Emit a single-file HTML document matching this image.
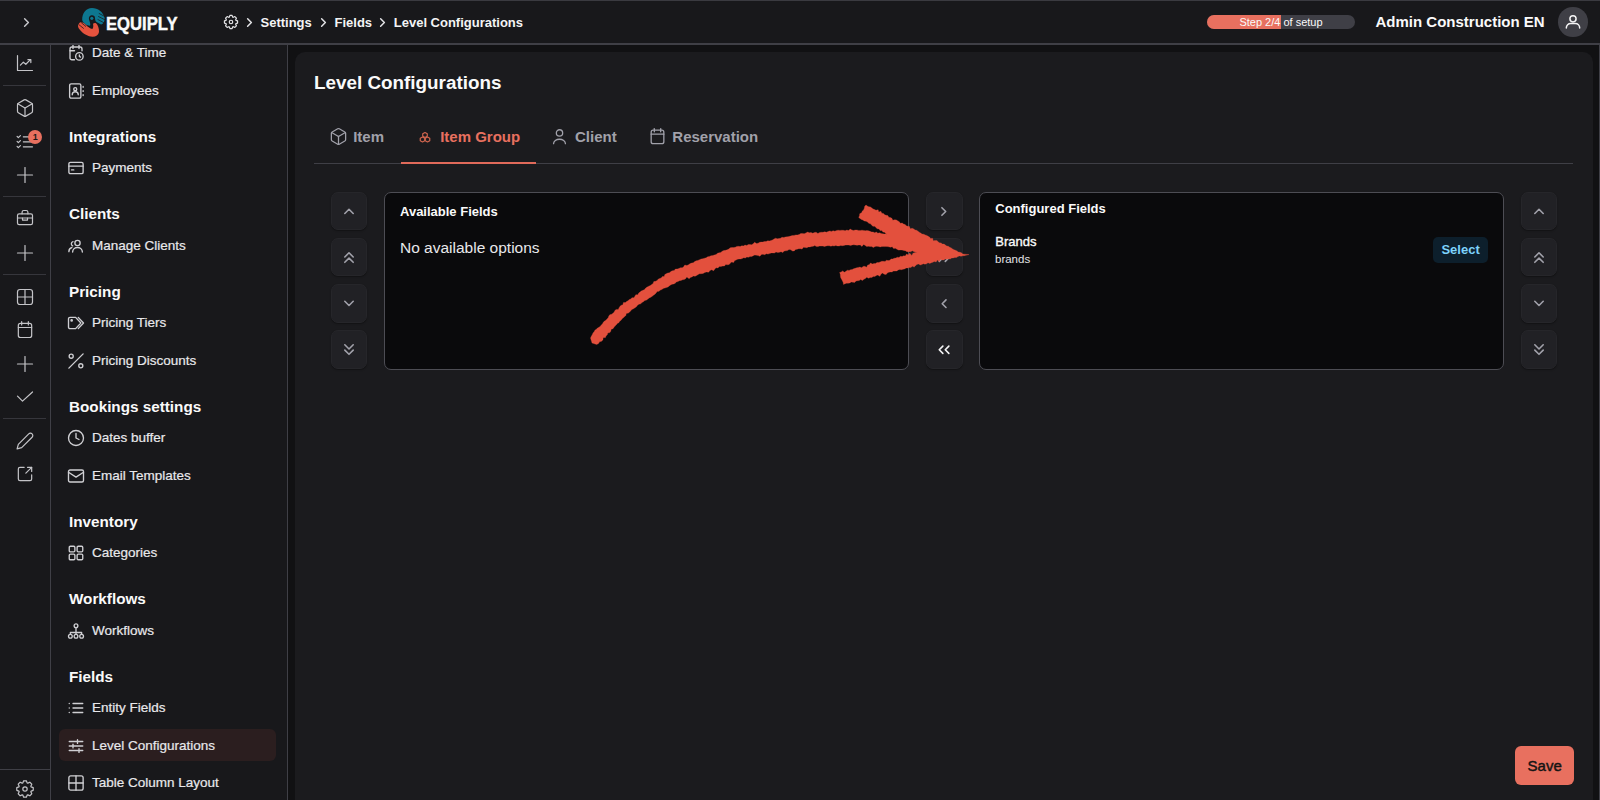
<!DOCTYPE html>
<html><head><meta charset="utf-8">
<style>
*{box-sizing:border-box;margin:0;padding:0}
html,body{width:1600px;height:800px;overflow:hidden;background:#111113;font-family:"Liberation Sans",sans-serif;color:#f4f4f5}
.abs{position:absolute}
svg{display:block}
.ic{fill:none;stroke:currentColor;stroke-linecap:round;stroke-linejoin:round}
#header{position:absolute;z-index:5;left:0;top:0;width:1600px;height:45px;background:#18181b;border-top:1px solid #3a3a40;border-bottom:2px solid #3f3f46}
#rail{position:absolute;left:0;top:45px;width:51px;height:755px;background:#18181b;border-right:1.2px solid #3f3f46}
#side{position:absolute;left:51px;top:45px;width:237px;height:755px;background:#18181b;border-right:1.2px solid #3f3f46}
#winr{position:absolute;left:1598.5px;top:0;width:1.5px;height:800px;background:#3f3f46}
#panel{position:absolute;left:294.8px;top:52.2px;width:1298px;height:760px;background:#1b1b1e;border-radius:10px}
.t{position:absolute;white-space:nowrap}
.rule{position:absolute;left:3px;width:43px;height:1.2px;background:#3a3a40}
.ri{position:absolute;left:17px;width:15px;height:15px;color:#c9c9cd}
.sh{position:absolute;left:18px;font-size:16px;font-weight:bold;color:#fafafa;line-height:20px;white-space:nowrap}
.si{position:absolute;left:18px;font-size:14px;color:#e4e4e7;line-height:20px;white-space:nowrap}
.si svg{position:absolute;left:0;top:2px;width:16px;height:16px;color:#c9c9cd}
.si span{position:absolute;left:23px;top:0}
.btn{position:absolute;width:36.5px;height:38.5px;background:#212125;border-radius:7px;color:#a9a9ae;border:1px solid #26262a;box-shadow:0 1px 1.5px rgba(0,0,0,0.35)}
.btn svg{position:absolute;left:-1px;top:-1px}
.box{position:absolute;top:191.5px;height:178.5px;background:#0a0a0c;border:1.5px solid #4d4d54;border-radius:7px}
</style></head><body>
<div id="panel"></div>
<div id="header">
<svg class="abs ic" style="left:19px;top:13.5px;color:#c9c9cd" width="15" height="15" viewBox="0 0 24 24" stroke-width="2.3"><path d="m9 18 6-6-6-6"/></svg>
<svg class="abs" style="left:74px;top:3px" width="36" height="36" viewBox="0 0 36 36">
<path fill="#0d7790" d="M8.2,16 C8,9 12,4 18,4 C24,4 29,8 30.5,13.5 C31,17 29.5,20 27,20.5 L22.5,18 C21.3,17 21,15.5 21,14 C21,12 19.5,11 17.5,11.3 C15.5,11.7 14.5,13.5 15,15.5 C15.6,18 17,20 16,21.8 C12.5,21.5 9,19.5 8.2,16 Z"/>
<circle cx="17.8" cy="14.3" r="1.6" fill="#0d7790"/><path d="M24.8,9.3 L31,12.6 M24.2,12.4 L31,15.8 M23.6,15.4 L30,18.8" stroke="#18181b" stroke-width="0.75" fill="none"/>
<path fill="#e5533e" d="M4,21.8 C4.5,19.5 5.8,18 7,18.2 C8.5,18.3 10,19 12,21 C14,23 16,24.5 18.3,25 C19.6,24 19.4,21.5 19,19.8 C20,19 21,18.8 22,19.3 C24,21 25.2,24.5 25,28 C24.5,31 22,32.7 18.5,32.7 C14,32.5 9.5,30 6.5,26.5 C5,25 4,23.5 4,21.8 Z"/>
<path d="M4.8,20.6 L9.8,24.6 M7.2,18.6 L12,22.6" stroke="#18181b" stroke-width="0.75" fill="none"/>
</svg>
<div class="t" style="left:106px;top:13.3px;font-size:18.5px;line-height:20px;font-weight:bold;transform:scaleX(0.9);transform-origin:0 0;color:#fafafa;-webkit-text-stroke:0.4px #fafafa">EQUIPLY</div>
<svg class="abs ic" style="left:222.5px;top:13px;color:#e4e4e7" width="16" height="16" viewBox="0 0 24 24" stroke-width="1.8"><path d="M19.38,9.47 L21.86,10.36 L21.86,13.64 L19.38,14.53 L19.00,15.43 L20.14,17.81 L17.81,20.14 L15.43,19.00 L14.53,19.38 L13.64,21.86 L10.36,21.86 L9.47,19.38 L8.57,19.00 L6.19,20.14 L3.86,17.81 L5.00,15.43 L4.62,14.53 L2.14,13.64 L2.14,10.36 L4.62,9.47 L5.00,8.57 L3.86,6.19 L6.19,3.86 L8.57,5.00 L9.47,4.62 L10.36,2.14 L13.64,2.14 L14.53,4.62 L15.43,5.00 L17.81,3.86 L20.14,6.19 L19.00,8.57 Z"/><circle cx="12" cy="12" r="2.6"/></svg>
<svg class="abs ic" style="left:241.75px;top:13.5px;color:#e4e4e7" width="15" height="15" viewBox="0 0 24 24" stroke-width="2.4"><path d="m9 18 6-6-6-6"/></svg>
<div class="t" style="left:260.5px;top:14px;font-size:13px;line-height:16px;font-weight:bold;color:#f4f4f5">Settings</div>
<svg class="abs ic" style="left:315.5px;top:13.5px;color:#e4e4e7" width="15" height="15" viewBox="0 0 24 24" stroke-width="2.4"><path d="m9 18 6-6-6-6"/></svg>
<div class="t" style="left:334.5px;top:14px;font-size:13px;line-height:16px;font-weight:bold;color:#f4f4f5">Fields</div>
<svg class="abs ic" style="left:375.25px;top:13.5px;color:#e4e4e7" width="15" height="15" viewBox="0 0 24 24" stroke-width="2.4"><path d="m9 18 6-6-6-6"/></svg>
<div class="t" style="left:393.75px;top:14px;font-size:13px;line-height:16px;font-weight:bold;color:#f4f4f5">Level Configurations</div>
<div class="abs" style="left:1207px;top:13.9px;width:148px;height:14.6px;border-radius:7.5px;background:#3f3f46;overflow:hidden">
<div class="abs" style="left:0;top:0;width:74.2px;height:100%;background:#e8705f"></div>
<div class="t" style="left:0;width:148px;text-align:center;top:0;font-size:11px;line-height:14.7px;color:#fafafa">Step 2/4 of setup</div>
</div>
<div class="t" style="left:1375.5px;top:12.4px;font-size:15px;line-height:18px;font-weight:bold;color:#fafafa">Admin Construction EN</div>
<div class="abs" style="left:1558.4px;top:6.3px;width:29.4px;height:29.4px;border-radius:50%;background:#3f3f46"></div>
<svg class="abs ic" style="left:1563px;top:9.6px;color:#f4f4f5" width="20" height="20" viewBox="0 0 24 24" stroke-width="1.8"><circle cx="12" cy="9.4" r="3.7"/><path d="M4 20.5v-0.3a5.2 5.2 0 0 1 5.2-5.2h5.6a5.2 5.2 0 0 1 5.2 5.2v0.3"/></svg>
</div>
<div id="rail"></div>
<div id="side"></div>
<div id="sidec">
<svg class="abs ic" style="left:14.5px;top:53.0px;color:#c4c4c8" width="20" height="20" viewBox="0 0 24 24" stroke-width="1.45"><path d="M3 3v18h18"/><path d="M6.5 14.5l3.5-3.5 3 2.5 5.5-5.5"/><path d="M15.5 8h3.5v3.5"/></svg>
<svg class="abs ic" style="left:14.5px;top:97.5px;color:#c4c4c8" width="20" height="20" viewBox="0 0 24 24" stroke-width="1.45"><path d="M21 8a2 2 0 0 0-1-1.73l-7-4a2 2 0 0 0-2 0l-7 4A2 2 0 0 0 3 8v8a2 2 0 0 0 1 1.73l7 4a2 2 0 0 0 2 0l7-4A2 2 0 0 0 21 16Z"/><path d="m3.3 7 8.7 5 8.7-5"/><path d="M12 22V12"/></svg>
<svg class="abs ic" style="left:14.5px;top:130.5px;color:#c4c4c8" width="20" height="20" viewBox="0 0 24 24" stroke-width="1.45"><path d="M2.5 6.5l1.5 1.5 2.5-2.5"/><path d="M2.5 12.5l1.5 1.5 2.5-2.5"/><path d="M2.5 18.5l1.5 1.5 2.5-2.5"/><path d="M10 7h11"/><path d="M10 13h11"/><path d="M10 19h11"/></svg>
<svg class="abs ic" style="left:14.5px;top:164.5px;color:#c4c4c8" width="20" height="20" viewBox="0 0 24 24" stroke-width="1.45"><path d="M12 3v18"/><path d="M3 12h18"/></svg>
<svg class="abs ic" style="left:14.5px;top:208.0px;color:#c4c4c8" width="20" height="20" viewBox="0 0 24 24" stroke-width="1.45"><rect x="3" y="7" width="18" height="13" rx="2"/><path d="M8.5 7V5a2 2 0 0 1 2-2h3a2 2 0 0 1 2 2v2"/><path d="M3 12h18"/><path d="M9 12v2.5h6V12"/></svg>
<svg class="abs ic" style="left:14.5px;top:242.5px;color:#c4c4c8" width="20" height="20" viewBox="0 0 24 24" stroke-width="1.45"><path d="M12 3v18"/><path d="M3 12h18"/></svg>
<svg class="abs ic" style="left:14.5px;top:287.0px;color:#c4c4c8" width="20" height="20" viewBox="0 0 24 24" stroke-width="1.45"><rect x="3" y="3" width="18" height="18" rx="3"/><path d="M3 12h18"/><path d="M12 3v18"/></svg>
<svg class="abs ic" style="left:14.5px;top:319.5px;color:#c4c4c8" width="20" height="20" viewBox="0 0 24 24" stroke-width="1.45"><rect x="4" y="4" width="16" height="17" rx="2.5"/><path d="M16 2v4"/><path d="M8 2v4"/><path d="M4 9h16"/></svg>
<svg class="abs ic" style="left:14.5px;top:353.5px;color:#c4c4c8" width="20" height="20" viewBox="0 0 24 24" stroke-width="1.45"><path d="M12 3v18"/><path d="M3 12h18"/></svg>
<svg class="abs ic" style="left:14.5px;top:386.5px;color:#c4c4c8" width="20" height="20" viewBox="0 0 24 24" stroke-width="1.45"><path d="M21 6 9 17l-6-6"/></svg>
<svg class="abs ic" style="left:14.5px;top:430.5px;color:#c4c4c8" width="20" height="20" viewBox="0 0 24 24" stroke-width="1.45"><path d="M20.5 3.5a2.8 2.8 0 0 0-4 0L4 16l-1.5 5.5L8 20 20.5 7.5a2.8 2.8 0 0 0 0-4z"/></svg>
<svg class="abs ic" style="left:14.5px;top:464.0px;color:#c4c4c8" width="20" height="20" viewBox="0 0 24 24" stroke-width="1.45"><path d="M11 4H6a2 2 0 0 0-2 2v12a2 2 0 0 0 2 2h12a2 2 0 0 0 2-2v-5"/><path d="M13 11 20 4"/><path d="M15 4h5v5"/></svg>
<svg class="abs ic" style="left:14.5px;top:778.5px;color:#c4c4c8" width="20" height="20" viewBox="0 0 24 24" stroke-width="1.45"><path d="M19.38,9.47 L21.86,10.36 L21.86,13.64 L19.38,14.53 L19.00,15.43 L20.14,17.81 L17.81,20.14 L15.43,19.00 L14.53,19.38 L13.64,21.86 L10.36,21.86 L9.47,19.38 L8.57,19.00 L6.19,20.14 L3.86,17.81 L5.00,15.43 L4.62,14.53 L2.14,13.64 L2.14,10.36 L4.62,9.47 L5.00,8.57 L3.86,6.19 L6.19,3.86 L8.57,5.00 L9.47,4.62 L10.36,2.14 L13.64,2.14 L14.53,4.62 L15.43,5.00 L17.81,3.86 L20.14,6.19 L19.00,8.57 Z"/><circle cx="12" cy="12" r="2.6"/></svg>
<div class="abs" style="left:3px;top:84.60000000000001px;width:43px;height:1.3px;background:#36363c"></div>
<div class="abs" style="left:3px;top:195.9px;width:43px;height:1.3px;background:#36363c"></div>
<div class="abs" style="left:3px;top:273.9px;width:43px;height:1.3px;background:#36363c"></div>
<div class="abs" style="left:3px;top:418.2px;width:43px;height:1.3px;background:#36363c"></div>
<div class="abs" style="left:0;top:768.6px;width:50.5px;height:1.3px;background:#3f3f46"></div>
<div class="abs" style="left:28.3px;top:129.9px;width:14px;height:14px;border-radius:50%;background:#e8705f;color:#1a1a1a;font-size:9px;font-weight:bold;text-align:center;line-height:14px">1</div>
<svg class="abs ic" style="left:66.75px;top:44.25px;color:#cfcfd3" width="18" height="18" viewBox="0 0 24 24" stroke-width="1.8"><path d="M20 9V6.5A2.5 2.5 0 0 0 17.5 4h-11A2.5 2.5 0 0 0 4 6.5v12A2.5 2.5 0 0 0 6.5 21H10"/><path d="M16 2v4"/><path d="M8 2v4"/><path d="M4 9h6"/><circle cx="16.5" cy="16.5" r="5"/><path d="M16.5 14.5v2l1.5 1"/></svg>
<div class="t" style="left:92px;top:43.32px;font-size:13.5px;line-height:20px;color:#e8e8eb;-webkit-text-stroke:0.2px #e8e8eb">Date &amp; Time</div>
<svg class="abs ic" style="left:66.75px;top:81.55px;color:#cfcfd3" width="18" height="18" viewBox="0 0 24 24" stroke-width="1.8"><rect x="3.5" y="2.5" width="15" height="19" rx="2"/><circle cx="11" cy="9.5" r="2"/><path d="M7 17a4 4 0 0 1 8 0"/><path d="M21.5 6v1"/><path d="M21.5 11.5v1"/><path d="M21.5 17v1"/></svg>
<div class="t" style="left:92px;top:80.62px;font-size:13.5px;line-height:20px;color:#e8e8eb;-webkit-text-stroke:0.2px #e8e8eb">Employees</div>
<div class="t" style="left:69px;top:126.52px;font-size:15.25px;line-height:20px;font-weight:bold;color:#fafafa">Integrations</div>
<svg class="abs ic" style="left:66.75px;top:159.15px;color:#cfcfd3" width="18" height="18" viewBox="0 0 24 24" stroke-width="1.8"><rect x="2.5" y="4.5" width="19" height="15" rx="2"/><path d="M2.5 9.5h19"/><path d="M6 14.5h3"/></svg>
<div class="t" style="left:92px;top:158.22px;font-size:13.5px;line-height:20px;color:#e8e8eb;-webkit-text-stroke:0.2px #e8e8eb">Payments</div>
<div class="t" style="left:69px;top:204.12px;font-size:15.25px;line-height:20px;font-weight:bold;color:#fafafa">Clients</div>
<svg class="abs ic" style="left:66.75px;top:236.75px;color:#cfcfd3" width="18" height="18" viewBox="0 0 24 24" stroke-width="1.8"><circle cx="14" cy="8" r="3.5"/><path d="M7.5 20c0-3.5 3-6 6.5-6s6.5 2.5 6.5 6"/><path d="M8 6.2a3 3 0 0 0-.5 5.6"/><path d="M2.5 19.5c0-2.8 1.5-4.8 4-5.5"/></svg>
<div class="t" style="left:92px;top:235.82px;font-size:13.5px;line-height:20px;color:#e8e8eb;-webkit-text-stroke:0.2px #e8e8eb">Manage Clients</div>
<div class="t" style="left:69px;top:281.72px;font-size:15.25px;line-height:20px;font-weight:bold;color:#fafafa">Pricing</div>
<svg class="abs ic" style="left:66.75px;top:314.35px;color:#cfcfd3" width="18" height="18" viewBox="0 0 24 24" stroke-width="1.8"><path d="M4 4.5H11.5L18.5 12L11.5 19.5H4A2 2 0 0 1 2 17.5V6.5A2 2 0 0 1 4 4.5Z"/><path d="M15 4.5L22 12L15 19.5"/><circle cx="6.2" cy="8.6" r="0.9"/></svg>
<div class="t" style="left:92px;top:313.42px;font-size:13.5px;line-height:20px;color:#e8e8eb;-webkit-text-stroke:0.2px #e8e8eb">Pricing Tiers</div>
<svg class="abs ic" style="left:66.75px;top:351.65px;color:#cfcfd3" width="18" height="18" viewBox="0 0 24 24" stroke-width="1.8"><path d="M21.5 2.5 2.5 21.5"/><circle cx="5.6" cy="5.6" r="2.7"/><circle cx="18.4" cy="18.4" r="2.7"/></svg>
<div class="t" style="left:92px;top:350.72px;font-size:13.5px;line-height:20px;color:#e8e8eb;-webkit-text-stroke:0.2px #e8e8eb">Pricing Discounts</div>
<div class="t" style="left:69px;top:396.62px;font-size:15.25px;line-height:20px;font-weight:bold;color:#fafafa">Bookings settings</div>
<svg class="abs ic" style="left:66.75px;top:429.25px;color:#cfcfd3" width="18" height="18" viewBox="0 0 24 24" stroke-width="1.8"><circle cx="12" cy="12" r="10"/><path d="M12 6v6l4 2"/></svg>
<div class="t" style="left:92px;top:428.32px;font-size:13.5px;line-height:20px;color:#e8e8eb;-webkit-text-stroke:0.2px #e8e8eb">Dates buffer</div>
<svg class="abs ic" style="left:66.75px;top:466.55px;color:#cfcfd3" width="18" height="18" viewBox="0 0 24 24" stroke-width="1.8"><rect x="2" y="4" width="20" height="16" rx="2"/><path d="m2 7 10 6.5L22 7"/></svg>
<div class="t" style="left:92px;top:465.62px;font-size:13.5px;line-height:20px;color:#e8e8eb;-webkit-text-stroke:0.2px #e8e8eb">Email Templates</div>
<div class="t" style="left:69px;top:511.52px;font-size:15.25px;line-height:20px;font-weight:bold;color:#fafafa">Inventory</div>
<svg class="abs ic" style="left:66.75px;top:544.15px;color:#cfcfd3" width="18" height="18" viewBox="0 0 24 24" stroke-width="1.8"><rect x="3" y="3" width="7.5" height="7.5" rx="1.5"/><rect x="13.5" y="3" width="7.5" height="7.5" rx="1.5"/><rect x="3" y="13.5" width="7.5" height="7.5" rx="1.5"/><rect x="13.5" y="13.5" width="7.5" height="7.5" rx="1.5"/></svg>
<div class="t" style="left:92px;top:543.22px;font-size:13.5px;line-height:20px;color:#e8e8eb;-webkit-text-stroke:0.2px #e8e8eb">Categories</div>
<div class="t" style="left:69px;top:589.12px;font-size:15.25px;line-height:20px;font-weight:bold;color:#fafafa">Workflows</div>
<svg class="abs ic" style="left:66.75px;top:621.75px;color:#cfcfd3" width="18" height="18" viewBox="0 0 24 24" stroke-width="1.8"><circle cx="12" cy="5" r="2.5"/><circle cx="4.5" cy="19" r="2.5"/><circle cx="12" cy="19" r="2.5"/><circle cx="19.5" cy="19" r="2.5"/><path d="M12 7.5v9"/><path d="M4.5 16.5v-2.5h15v2.5"/></svg>
<div class="t" style="left:92px;top:620.82px;font-size:13.5px;line-height:20px;color:#e8e8eb;-webkit-text-stroke:0.2px #e8e8eb">Workflows</div>
<div class="t" style="left:69px;top:666.72px;font-size:15.25px;line-height:20px;font-weight:bold;color:#fafafa">Fields</div>
<svg class="abs ic" style="left:66.75px;top:699.35px;color:#cfcfd3" width="18" height="18" viewBox="0 0 24 24" stroke-width="1.8"><path d="M8 6h13"/><path d="M8 12h13"/><path d="M8 18h13"/><path d="M3 6h.01"/><path d="M3 12h.01"/><path d="M3 18h.01"/></svg>
<div class="t" style="left:92px;top:698.42px;font-size:13.5px;line-height:20px;color:#e8e8eb;-webkit-text-stroke:0.2px #e8e8eb">Entity Fields</div>
<div class="abs" style="left:59px;top:728.95px;width:217px;height:32.4px;border-radius:6px;background:#2b1e1f"></div>
<svg class="abs ic" style="left:66.75px;top:736.65px;color:#cfcfd3" width="18" height="18" viewBox="0 0 24 24" stroke-width="1.8"><path d="M3 6h18"/><path d="M3 12h18"/><path d="M3 18h18"/><path d="M14 3.5v5"/><path d="M8 9.5v5"/><path d="M16 15.5v5"/></svg>
<div class="t" style="left:92px;top:735.72px;font-size:13.5px;line-height:20px;color:#e8e8eb;-webkit-text-stroke:0.2px #e8e8eb">Level Configurations</div>
<svg class="abs ic" style="left:66.75px;top:773.95px;color:#cfcfd3" width="18" height="18" viewBox="0 0 24 24" stroke-width="1.8"><rect x="2.5" y="2.5" width="19" height="19" rx="2.5"/><path d="M2.5 12h19"/><path d="M12 2.5v19"/></svg>
<div class="t" style="left:92px;top:773.02px;font-size:13.5px;line-height:20px;color:#e8e8eb;-webkit-text-stroke:0.2px #e8e8eb">Table Column Layout</div>
</div><!--/sidec-->
<div id="winr"></div>
<div id="mainc">
<div class="t" style="left:314px;top:73.1px;font-size:18.85px;line-height:20px;font-weight:bold;color:#fafafa">Level Configurations</div>
<svg class="abs ic" style="left:328.5px;top:127.25px;color:#a1a1aa" width="19" height="19" viewBox="0 0 24 24" stroke-width="1.6"><path d="M21 8a2 2 0 0 0-1-1.73l-7-4a2 2 0 0 0-2 0l-7 4A2 2 0 0 0 3 8v8a2 2 0 0 0 1 1.73l7 4a2 2 0 0 0 2 0l7-4A2 2 0 0 0 21 16Z"/><path d="m3.3 7 8.7 5 8.7-5"/><path d="M12 22V12"/></svg>
<div class="t" style="left:353.2px;top:127.1px;font-size:15px;line-height:20px;font-weight:bold;color:#a1a1aa">Item</div>
<svg class="abs ic" style="left:419px;top:130.5px;color:#d0654f" width="12" height="12" viewBox="0 0 24 24" stroke-width="2.4"><path d="M12 3l4.5 2.5v5L12 13l-4.5-2.5v-5z"/><path d="M7 12l4.5 2.5v5L7 22l-4.5-2.5v-5z"/><path d="M17 12l4.5 2.5v5L17 22l-4.5-2.5v-5z"/></svg>
<div class="t" style="left:440.2px;top:127.1px;font-size:15px;line-height:20px;font-weight:bold;color:#e8705f">Item Group</div>
<svg class="abs ic" style="left:550.3px;top:127.25px;color:#a1a1aa" width="19" height="19" viewBox="0 0 24 24" stroke-width="1.65"><circle cx="12" cy="7.5" r="4"/><path d="M4.5 21a7.5 5.5 0 0 1 15 0"/></svg>
<div class="t" style="left:575px;top:127.1px;font-size:15px;line-height:20px;font-weight:bold;color:#a1a1aa">Client</div>
<svg class="abs ic" style="left:647.5px;top:127.25px;color:#a1a1aa" width="19" height="19" viewBox="0 0 24 24" stroke-width="1.65"><rect x="4" y="4" width="16" height="17" rx="2.5"/><path d="M16 2v4"/><path d="M8 2v4"/><path d="M4 9h16"/></svg>
<div class="t" style="left:672.3px;top:127.1px;font-size:15px;line-height:20px;font-weight:bold;color:#a1a1aa">Reservation</div>
<div class="abs" style="left:314px;top:162.6px;width:1259px;height:1.2px;background:#3f3f46"></div>
<div class="abs" style="left:400.75px;top:162.4px;width:135.5px;height:1.6px;background:#e06a5a"></div>
<div class="btn" style="left:330.9px;top:191.75px"><svg class="ic" style="color:#a1a1aa" width="36" height="38" viewBox="0 0 36 38" stroke-width="1.6"><path d="M13.8 21.5 18 17.3l4.2 4.2"/></svg></div>
<div class="btn" style="left:330.9px;top:237.95px"><svg class="ic" style="color:#a1a1aa" width="36" height="38" viewBox="0 0 36 38" stroke-width="1.6"><path d="M13.8 19 18 14.8l4.2 4.2"/><path d="M13.8 24.3 18 20.1l4.2 4.2"/></svg></div>
<div class="btn" style="left:330.9px;top:284.15px"><svg class="ic" style="color:#a1a1aa" width="36" height="38" viewBox="0 0 36 38" stroke-width="1.6"><path d="M13.8 17.3 18 21.5l4.2-4.2"/></svg></div>
<div class="btn" style="left:330.9px;top:330.4px"><svg class="ic" style="color:#a1a1aa" width="36" height="38" viewBox="0 0 36 38" stroke-width="1.6"><path d="M13.8 14.8 18 19l4.2-4.2"/><path d="M13.8 20.1 18 24.3l4.2-4.2"/></svg></div>
<div class="btn" style="left:1520.8px;top:191.75px"><svg class="ic" style="color:#a1a1aa" width="36" height="38" viewBox="0 0 36 38" stroke-width="1.6"><path d="M13.8 21.5 18 17.3l4.2 4.2"/></svg></div>
<div class="btn" style="left:1520.8px;top:237.95px"><svg class="ic" style="color:#a1a1aa" width="36" height="38" viewBox="0 0 36 38" stroke-width="1.6"><path d="M13.8 19 18 14.8l4.2 4.2"/><path d="M13.8 24.3 18 20.1l4.2 4.2"/></svg></div>
<div class="btn" style="left:1520.8px;top:284.15px"><svg class="ic" style="color:#a1a1aa" width="36" height="38" viewBox="0 0 36 38" stroke-width="1.6"><path d="M13.8 17.3 18 21.5l4.2-4.2"/></svg></div>
<div class="btn" style="left:1520.8px;top:330.4px"><svg class="ic" style="color:#a1a1aa" width="36" height="38" viewBox="0 0 36 38" stroke-width="1.6"><path d="M13.8 14.8 18 19l4.2-4.2"/><path d="M13.8 20.1 18 24.3l4.2-4.2"/></svg></div>
<div class="btn" style="left:926.2px;top:191.75px"><svg class="ic" style="color:#a1a1aa" width="36" height="38" viewBox="0 0 36 38" stroke-width="1.6"><path d="M15.9 15.7l3.8 3.8-3.8 3.8"/></svg></div>
<div class="btn" style="left:926.2px;top:237.95px"><svg class="ic" style="color:#a1a1aa" width="36" height="38" viewBox="0 0 36 38" stroke-width="1.6"><path d="M13.3 16.15l3.6 3.6-3.6 3.6"/><path d="M19.3 16.15l3.6 3.6-3.6 3.6"/></svg></div>
<div class="btn" style="left:926.2px;top:284.15px"><svg class="ic" style="color:#a1a1aa" width="36" height="38" viewBox="0 0 36 38" stroke-width="1.6"><path d="M20 15.9l-3.8 3.8 3.8 3.8"/></svg></div>
<div class="btn" style="left:926.2px;top:330.4px"><svg class="ic" style="color:#f4f4f5" width="36" height="38" viewBox="0 0 36 38" stroke-width="1.6"><path d="M16.85 16.15l-3.6 3.6 3.6 3.6"/><path d="M22.85 16.15l-3.6 3.6 3.6 3.6"/></svg></div>
<div class="box" style="left:384px;width:524.5px"></div>
<div class="box" style="left:979.3px;width:524.6px"></div>
<div class="t" style="left:400px;top:203.75px;font-size:13px;line-height:16px;font-weight:bold;color:#fafafa">Available Fields</div>
<div class="t" style="left:400px;top:238.4px;font-size:15.5px;line-height:20px;color:#e8e8eb">No available options</div>
<div class="t" style="left:995.25px;top:201.2px;font-size:13px;line-height:16px;font-weight:bold;color:#fafafa">Configured Fields</div>
<div class="t" style="left:995.25px;top:234.4px;font-size:13px;line-height:16px;color:#fafafa;-webkit-text-stroke:0.35px #fafafa">Brands</div>
<div class="t" style="left:995px;top:251.8px;font-size:11.5px;line-height:14px;color:#e4e4e7">brands</div>
<div class="abs" style="left:1433.4px;top:236.6px;width:54.4px;height:26.5px;border-radius:5px;background:#0d1f2c;color:#7dd3fc;font-size:13px;font-weight:bold;line-height:26.5px;text-align:center">Select</div>
<div class="abs" style="left:1515px;top:745.6px;width:59.4px;height:39.4px;border-radius:6px;background:#e8705f;color:#141414;font-size:15px;line-height:39.4px;text-align:center;-webkit-text-stroke:0.45px #141414">Save</div>
<svg class="abs" style="left:0;top:0;z-index:3" width="1600" height="800" viewBox="0 0 1600 800"><path d="M590.5,338.0 L591.3,336.3 L592.2,334.7 L593.0,333.0 L594.1,331.7 L594.9,330.2 L596.3,329.3 L597.5,328.1 L599.0,327.3 L600.3,326.3 L601.3,325.0 L602.5,323.8 L603.3,322.3 L604.5,321.1 L605.9,320.2 L607.0,318.9 L608.2,317.8 L608.8,316.1 L609.8,314.7 L611.6,314.2 L613.0,313.2 L614.2,312.1 L614.9,310.4 L616.2,309.4 L618.3,309.4 L619.1,307.7 L620.0,306.3 L621.3,305.2 L622.9,304.7 L623.4,302.6 L625.4,302.6 L626.6,301.5 L628.0,300.7 L629.3,299.6 L630.8,299.0 L631.9,297.7 L633.9,297.8 L634.9,296.2 L635.8,294.7 L637.9,294.8 L638.7,293.1 L640.0,292.1 L641.3,290.9 L643.0,290.3 L644.6,289.5 L645.7,288.0 L647.2,287.1 L648.7,286.2 L650.3,285.5 L651.7,284.5 L653.1,283.4 L653.8,281.6 L655.6,281.3 L657.1,280.6 L658.1,279.2 L659.6,278.5 L661.2,277.9 L662.3,276.6 L664.2,276.5 L664.8,274.6 L666.2,273.7 L667.8,273.0 L669.5,272.8 L670.8,271.5 L672.4,270.8 L674.2,270.5 L675.4,269.0 L677.2,269.0 L678.9,268.5 L680.4,267.7 L682.3,267.7 L683.7,266.7 L684.8,265.0 L686.9,265.5 L688.5,264.8 L689.9,263.7 L691.5,263.1 L693.3,262.8 L694.7,261.6 L696.2,260.8 L697.9,260.4 L699.5,259.7 L701.1,259.0 L702.8,258.7 L704.5,258.2 L706.2,257.8 L707.7,256.8 L709.4,256.4 L711.0,255.7 L712.8,255.6 L714.4,254.9 L716.1,254.5 L717.5,253.3 L719.1,252.8 L720.8,252.4 L722.2,251.2 L723.8,250.6 L725.6,250.3 L727.2,249.8 L728.8,249.0 L730.2,247.8 L731.9,247.5 L733.6,247.6 L735.2,247.2 L736.8,246.4 L738.5,246.3 L740.2,246.6 L741.8,245.8 L743.5,245.9 L745.0,245.1 L746.8,245.5 L748.3,244.5 L750.0,244.6 L751.7,244.7 L753.2,243.8 L754.6,242.3 L756.5,243.6 L758.1,243.2 L759.6,242.3 L761.2,242.1 L762.9,242.0 L764.4,241.5 L766.1,241.6 L767.7,240.8 L769.4,240.9 L771.0,240.6 L772.5,239.9 L774.0,239.1 L775.5,238.2 L777.3,238.8 L778.9,238.6 L780.5,238.2 L782.0,237.3 L783.8,237.5 L785.4,236.9 L787.2,236.8 L788.9,236.6 L790.6,236.0 L792.3,235.6 L794.0,235.4 L795.7,234.9 L797.5,234.9 L799.2,234.5 L800.7,233.6 L802.5,233.4 L804.2,233.7 L805.9,232.9 L807.6,232.1 L809.3,232.7 L811.0,232.5 L812.8,233.2 L814.4,232.5 L816.1,232.2 L817.9,233.4 L819.6,232.5 L821.2,232.2 L823.0,232.3 L824.7,231.8 L826.4,232.2 L828.1,231.6 L829.7,231.0 L831.5,231.4 L833.1,230.7 L834.9,231.2 L836.6,230.4 L838.3,230.2 L840.0,230.4 L841.7,230.2 L843.4,230.3 L845.1,230.7 L846.8,230.1 L848.5,230.5 L850.2,229.1 L851.9,230.0 L853.5,230.5 L855.2,230.0 L856.9,230.0 L858.6,230.4 L860.3,230.4 L862.0,230.2 L863.7,230.4 L865.3,230.7 L866.9,230.6 L868.5,230.8 L870.0,231.3 L871.6,231.9 L873.2,232.0 L874.7,232.7 L876.4,232.1 L877.9,233.2 L879.5,232.8 L881.1,233.4 L882.6,233.7 L884.2,234.1 L885.8,233.9 L887.4,234.3 L885.8,233.7 L884.7,232.3 L882.9,232.0 L881.9,230.5 L880.0,230.5 L879.0,228.9 L877.2,228.7 L875.9,227.6 L874.7,226.3 L872.8,226.3 L871.6,225.0 L870.4,223.8 L868.8,223.3 L867.5,222.1 L866.1,221.2 L864.3,221.0 L862.9,220.1 L861.4,219.4 L860.0,218.5 L858.7,217.4 L859.5,215.8 L859.7,213.8 L861.6,212.8 L862.3,211.1 L863.6,209.9 L864.3,208.2 L864.7,206.3 L866.0,205.0 L867.3,206.0 L868.8,206.7 L870.5,206.9 L871.8,207.9 L873.1,208.9 L874.6,209.5 L876.0,210.3 L878.1,209.7 L878.8,212.0 L880.9,211.3 L881.8,213.2 L883.5,213.4 L884.7,214.7 L886.2,215.3 L887.8,215.6 L888.8,217.2 L890.4,217.6 L891.9,218.3 L892.8,220.2 L894.8,219.7 L896.5,220.0 L897.9,220.9 L899.3,221.7 L900.3,223.3 L902.2,223.0 L903.5,224.0 L905.1,224.6 L906.3,225.7 L907.8,226.2 L909.5,226.6 L910.2,228.7 L912.2,228.3 L913.8,228.9 L915.1,229.9 L916.7,230.3 L918.0,231.3 L919.3,232.2 L920.7,233.1 L922.0,234.1 L923.8,234.2 L925.2,234.9 L926.8,235.4 L928.1,236.3 L929.5,237.1 L930.7,238.4 L932.6,238.3 L933.2,240.7 L935.1,240.4 L936.9,240.5 L938.1,241.7 L939.4,242.7 L941.1,242.9 L942.4,244.0 L944.1,244.1 L945.4,245.1 L946.8,246.0 L948.4,246.3 L949.7,247.3 L951.3,247.9 L952.6,248.9 L954.0,249.7 L955.5,250.3 L957.0,250.9 L958.3,251.9 L959.9,252.3 L961.5,252.8 L962.7,254.0 L964.8,254.2 L966.9,254.4 L969.0,254.5 L967.5,255.0 L965.9,255.2 L964.3,255.7 L962.7,255.8 L961.2,256.3 L959.4,255.9 L957.9,256.6 L956.5,257.4 L954.8,257.5 L953.3,257.9 L951.7,258.1 L950.2,259.0 L948.5,258.7 L947.0,259.3 L945.3,259.1 L943.8,259.9 L942.2,259.9 L940.4,259.2 L939.3,261.7 L937.3,260.1 L936.1,262.0 L934.3,261.4 L932.8,262.3 L931.3,262.7 L929.8,263.4 L928.0,262.8 L926.6,263.7 L925.0,264.2 L923.3,263.7 L921.8,264.6 L920.3,265.0 L918.4,264.0 L916.9,264.4 L915.5,265.8 L914.2,267.1 L912.3,266.2 L910.9,267.4 L909.3,267.5 L907.7,268.1 L906.1,268.0 L904.6,268.9 L903.0,269.2 L901.5,269.7 L899.8,269.6 L898.2,269.9 L896.8,270.9 L895.2,271.1 L893.5,271.1 L892.0,272.0 L890.3,271.9 L888.8,272.2 L887.3,272.9 L886.1,274.6 L884.3,274.2 L882.3,272.9 L881.0,274.3 L879.8,276.3 L877.8,275.1 L876.3,275.5 L874.8,276.4 L873.2,276.4 L871.8,277.5 L870.1,277.6 L868.6,278.2 L866.7,277.2 L865.4,278.6 L863.9,279.3 L862.5,280.4 L860.6,279.6 L859.2,280.6 L857.6,280.7 L856.0,281.0 L854.7,282.4 L853.0,282.2 L851.2,282.0 L849.8,282.9 L848.2,283.2 L846.5,283.2 L845.0,283.7 L843.5,284.4 L843.2,282.6 L842.5,281.0 L841.7,279.4 L840.7,277.8 L840.4,276.0 L840.3,274.2 L839.6,272.5 L841.2,272.1 L842.5,270.9 L844.5,272.2 L846.0,271.3 L847.3,270.2 L849.1,270.4 L850.5,269.7 L852.2,269.5 L853.6,268.7 L855.2,268.3 L856.7,267.8 L858.3,267.4 L859.9,267.1 L861.7,267.8 L863.0,266.4 L864.7,266.3 L866.6,267.2 L867.7,265.0 L869.2,264.7 L870.5,263.0 L872.4,263.9 L874.0,263.6 L875.6,263.5 L877.0,262.5 L878.7,262.5 L880.2,261.9 L881.7,261.3 L883.4,261.3 L885.1,261.4 L886.4,260.3 L888.2,260.6 L889.8,260.2 L891.1,258.9 L892.7,258.9 L894.2,258.2 L895.9,258.1 L897.3,257.2 L899.0,257.5 L900.4,256.3 L902.1,256.6 L903.6,255.8 L905.3,255.9 L906.5,254.0 L908.4,255.1 L909.6,253.0 L911.8,255.4 L912.9,253.2 L914.5,252.8 L916.0,252.3 L917.7,252.3 L915.9,252.0 L914.1,251.8 L912.4,250.8 L910.5,251.7 L908.7,251.7 L906.9,251.7 L905.4,250.7 L903.7,250.4 L902.0,250.0 L900.3,250.0 L898.5,250.1 L896.9,249.2 L895.4,248.3 L893.6,248.5 L892.2,246.8 L890.4,247.2 L888.7,246.8 L887.0,246.5 L885.3,246.6 L883.6,246.6 L881.9,246.5 L880.2,246.9 L878.5,246.5 L876.8,246.3 L875.1,246.5 L873.4,247.4 L871.7,246.6 L870.0,246.5 L868.4,246.3 L866.7,246.5 L865.2,245.5 L863.7,244.4 L861.8,246.5 L860.4,245.0 L858.8,245.0 L857.1,245.3 L855.5,245.1 L853.8,244.8 L852.2,244.9 L850.6,245.6 L848.9,245.1 L847.3,245.0 L845.6,245.1 L844.0,245.4 L842.4,245.7 L840.7,245.5 L839.1,246.0 L837.4,245.9 L835.8,245.5 L834.1,246.0 L832.5,245.8 L830.9,246.2 L829.3,245.8 L827.7,245.7 L826.1,246.0 L824.5,246.5 L822.9,246.1 L821.2,246.1 L819.6,246.0 L818.0,246.6 L816.4,246.6 L814.8,245.6 L813.2,246.3 L811.6,246.4 L810.0,246.9 L808.4,247.0 L806.8,247.7 L805.2,247.6 L803.5,247.3 L802.1,249.1 L800.4,248.7 L798.7,248.7 L797.2,249.2 L795.6,249.4 L794.2,250.9 L792.5,251.0 L790.7,249.8 L789.0,249.5 L787.5,250.6 L785.9,250.8 L784.2,251.1 L782.8,252.6 L781.0,251.7 L779.4,252.3 L777.8,252.6 L776.0,252.0 L774.5,253.0 L772.8,252.9 L771.2,252.9 L769.6,253.6 L768.0,254.1 L766.3,253.7 L764.7,254.7 L763.0,254.3 L761.4,254.6 L760.0,256.3 L758.2,255.6 L756.5,255.2 L754.8,255.0 L753.2,255.7 L751.7,256.5 L750.0,256.6 L748.5,257.3 L746.8,257.0 L745.4,258.0 L743.7,257.7 L742.2,258.6 L740.7,259.0 L739.0,258.9 L737.5,259.3 L736.0,260.0 L734.5,260.7 L733.6,262.6 L731.7,262.1 L730.4,263.1 L729.2,264.4 L727.6,264.8 L725.7,264.5 L724.5,266.0 L722.7,266.1 L721.0,266.4 L719.3,266.6 L718.0,267.9 L716.1,267.8 L714.8,269.0 L713.7,270.7 L711.5,269.8 L710.0,270.5 L708.6,272.2 L706.5,271.9 L704.8,272.5 L703.1,273.4 L701.2,273.7 L699.5,273.8 L698.1,274.6 L696.6,275.4 L695.1,276.3 L693.4,276.0 L691.9,276.9 L690.4,277.6 L689.1,278.7 L686.8,277.1 L685.6,278.7 L684.2,279.5 L682.6,279.8 L681.0,280.4 L679.4,280.7 L678.0,281.6 L676.4,282.0 L675.2,283.2 L673.7,284.0 L672.0,284.2 L670.6,285.0 L669.2,285.9 L668.0,287.0 L666.4,287.5 L664.8,288.0 L663.2,288.4 L661.9,289.5 L660.3,290.1 L659.1,291.3 L657.1,291.5 L656.1,293.0 L654.9,294.2 L653.5,295.2 L652.2,296.3 L650.8,297.2 L649.2,297.9 L647.9,299.0 L646.6,300.1 L644.8,300.6 L643.4,301.7 L642.0,302.6 L640.7,303.8 L638.9,304.3 L637.5,305.3 L636.4,306.8 L635.0,307.7 L633.5,308.7 L631.9,309.4 L630.8,310.7 L629.7,312.0 L628.4,313.1 L626.3,313.5 L625.9,315.4 L624.7,316.6 L623.4,317.7 L622.1,318.8 L621.1,320.2 L619.7,321.2 L618.8,322.8 L617.2,323.6 L616.2,325.0 L615.0,326.1 L613.9,327.4 L613.0,328.7 L611.2,329.3 L610.8,331.2 L609.9,332.6 L607.8,333.0 L607.3,334.8 L606.0,335.9 L605.5,337.6 L603.1,337.7 L603.0,339.8 L601.6,341.2 L599.6,341.8 L598.5,343.6 L596.7,344.5 L595.1,344.0 L593.6,343.5 L592.0,343.0 L591.5,341.3 L591.0,339.7 Z" fill="#e3503d" stroke="#e3503d" stroke-width="0.3" stroke-linejoin="miter"/></svg>
</div><!--/mainc-->
</body></html>
